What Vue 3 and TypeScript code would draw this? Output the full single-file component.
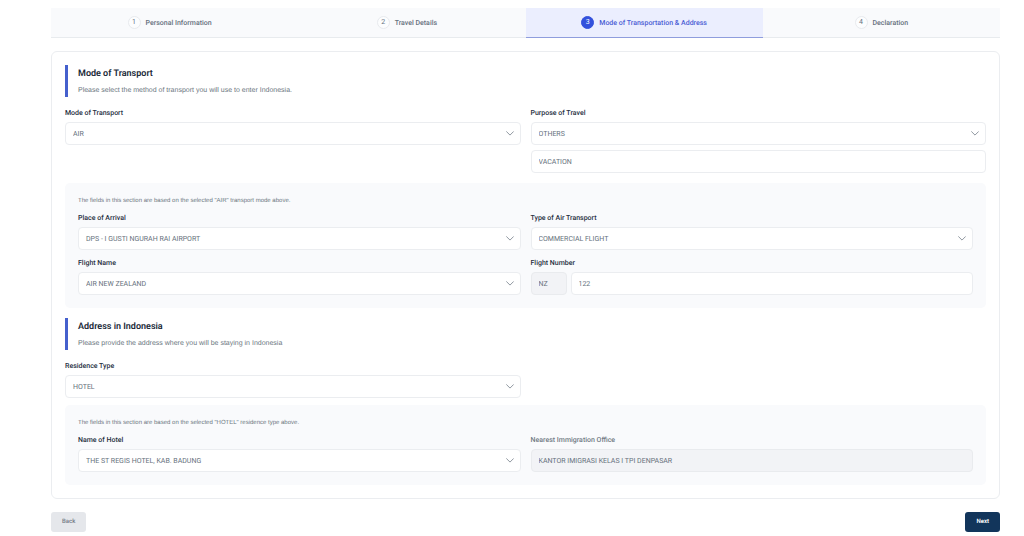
<script setup lang="ts">
import { ref } from 'vue'

interface Step {
  id: number
  title: string
}

const steps: Step[] = [
  { id: 1, title: 'Personal Information' },
  { id: 2, title: 'Travel Details' },
  { id: 3, title: 'Mode of Transportation & Address' },
  { id: 4, title: 'Declaration' },
]

const currentStep = ref(3)
const transportMode = ref('AIR')
const purpose = ref('OTHERS')
const purposeDetail = ref('VACATION')
const arrivalPlace = ref('DPS - I GUSTI NGURAH RAI AIRPORT')
const airTransport = ref('COMMERCIAL FLIGHT')
const airline = ref('AIR NEW ZEALAND')
const flightPrefix = ref('NZ')
const flightNumber = ref('122')
const residenceType = ref('HOTEL')
const hotel = ref('THE ST REGIS HOTEL, KAB. BADUNG')
const immigrationOffice = ref('KANTOR IMIGRASI KELAS I TPI DENPASAR')
</script>

<template>
  <main class="page">
    <nav aria-label="Progress">
      <ol class="stepper">
        <li v-for="step in steps" :key="step.id">
          <button
            type="button"
            class="step"
            :class="{ active: step.id === currentStep }"
            :aria-current="step.id === currentStep ? 'step' : undefined"
            @click="currentStep = step.id"
          >
            <span class="step-number">{{ step.id }}</span>
            <span>{{ step.title }}</span>
          </button>
        </li>
      </ol>
    </nav>

    <form @submit.prevent>
      <div class="card">
        <header class="heading">
          <h2>Mode of Transport</h2>
          <p>Please select the method of transport you will use to enter Indonesia.</p>
        </header>

        <div class="grid">
          <div class="field">
            <label for="transport-mode">Mode of Transport</label>
            <div class="select">
              <select id="transport-mode" v-model="transportMode" class="control">
                <option>AIR</option>
              </select>
              <svg class="chevron" viewBox="0 0 8 5" aria-hidden="true"><path d="M.6.7 4 4.1 7.4.7" /></svg>
            </div>
          </div>
          <div class="field">
            <label for="purpose">Purpose of Travel</label>
            <div class="select">
              <select id="purpose" v-model="purpose" class="control">
                <option>OTHERS</option>
              </select>
              <svg class="chevron" viewBox="0 0 8 5" aria-hidden="true"><path d="M.6.7 4 4.1 7.4.7" /></svg>
            </div>
            <input v-model="purposeDetail" class="control" type="text" aria-label="Other purpose of travel" />
          </div>
        </div>

        <section class="panel">
          <p class="note">The fields in this section are based on the selected "{{ transportMode }}" transport mode above.</p>
          <div class="grid">
            <div class="field">
              <label for="arrival">Place of Arrival</label>
              <div class="select">
                <select id="arrival" v-model="arrivalPlace" class="control">
                  <option>DPS - I GUSTI NGURAH RAI AIRPORT</option>
                </select>
                <svg class="chevron" viewBox="0 0 8 5" aria-hidden="true"><path d="M.6.7 4 4.1 7.4.7" /></svg>
              </div>
            </div>
            <div class="field">
              <label for="air-type">Type of Air Transport</label>
              <div class="select">
                <select id="air-type" v-model="airTransport" class="control">
                  <option>COMMERCIAL FLIGHT</option>
                </select>
                <svg class="chevron" viewBox="0 0 8 5" aria-hidden="true"><path d="M.6.7 4 4.1 7.4.7" /></svg>
              </div>
            </div>
            <div class="field">
              <label for="airline">Flight Name</label>
              <div class="select">
                <select id="airline" v-model="airline" class="control">
                  <option>AIR NEW ZEALAND</option>
                </select>
                <svg class="chevron" viewBox="0 0 8 5" aria-hidden="true"><path d="M.6.7 4 4.1 7.4.7" /></svg>
              </div>
            </div>
            <div class="field">
              <label for="flight-number">Flight Number</label>
              <div class="flight">
                <input v-model="flightPrefix" class="control prefix" type="text" aria-label="Airline code" disabled />
                <input id="flight-number" v-model="flightNumber" class="control" type="text" />
              </div>
            </div>
          </div>
        </section>

        <header class="heading">
          <h2>Address in Indonesia</h2>
          <p>Please provide the address where you will be staying in Indonesia</p>
        </header>

        <div class="grid">
          <div class="field">
            <label for="residence">Residence Type</label>
            <div class="select">
              <select id="residence" v-model="residenceType" class="control">
                <option>HOTEL</option>
              </select>
              <svg class="chevron" viewBox="0 0 8 5" aria-hidden="true"><path d="M.6.7 4 4.1 7.4.7" /></svg>
            </div>
          </div>
        </div>

        <section class="panel residence">
          <p class="note">The fields in this section are based on the selected "{{ residenceType }}" residence type above.</p>
          <div class="grid">
            <div class="field">
              <label for="hotel">Name of Hotel</label>
              <div class="select">
                <select id="hotel" v-model="hotel" class="control">
                  <option>THE ST REGIS HOTEL, KAB. BADUNG</option>
                </select>
                <svg class="chevron" viewBox="0 0 8 5" aria-hidden="true"><path d="M.6.7 4 4.1 7.4.7" /></svg>
              </div>
            </div>
            <div class="field">
              <label for="office" class="muted">Nearest Immigration Office</label>
              <input id="office" v-model="immigrationOffice" class="control" type="text" disabled />
            </div>
          </div>
        </section>
      </div>

      <div class="actions">
        <button type="button" class="button back">Back</button>
        <button type="submit" class="button next">Next</button>
      </div>
    </form>
  </main>
</template>

<style>
body {
  margin: 0;
  background: #fff;
}
</style>

<style scoped>
.page {
  padding: 8px 24px 4px 51px;
  font-family: Roboto, "Liberation Sans", sans-serif;
  font-size: 7px;
  line-height: 10px;
  color: #27303f;
  text-rendering: geometricPrecision;
}

.page * {
  box-sizing: border-box;
  text-rendering: inherit;
}

.stepper {
  display: grid;
  grid-template-columns: repeat(4, 1fr);
  margin: 0 0 13px;
  padding: 0;
  list-style: none;
}

.step {
  display: flex;
  align-items: center;
  justify-content: center;
  gap: 5px;
  width: 100%;
  height: 30px;
  padding: 0;
  border: 0;
  border-bottom: 1px solid #e8ebee;
  background: #f9fafc;
  color: #66717e;
  font: inherit;
  font-weight: 500;
}

.step-number {
  width: 13px;
  height: 13px;
  border: 1px solid #e8eaee;
  border-radius: 50%;
  background: #fcfdfe;
  line-height: 11px;
  text-align: center;
  font-weight: 400;
}

.step.active {
  border-bottom-color: #8f9ddd;
  background: #ebeefe;
  color: #4b60d5;
}

.active .step-number {
  border-color: #3351dc;
  background: #3351dc;
  color: #fff;
}

.card {
  padding: 13px;
  border: 1px solid #ebedf0;
  border-radius: 6px;
}

.heading {
  margin-bottom: 10px;
  padding: 3px 0 1px 10px;
  border-left: 3px solid #4560cd;
}

.heading h2 {
  margin: 0;
  font-size: 9px;
  line-height: 12px;
  font-weight: 600;
  color: #202938;
}

.heading p {
  margin: 6px 0 0;
  font-family: "Liberation Sans", Arial, sans-serif;
  color: #6c7781;
}

.grid {
  display: grid;
  grid-template-columns: 1fr 1fr;
  gap: 7px 10px;
}

.field {
  display: flex;
  flex-direction: column;
  align-self: start;
  gap: 5px;
  min-width: 0;
}

label {
  padding-top: 2px;
  line-height: 8px;
  font-weight: 500;
}

label.muted {
  color: #717a85;
}

.select {
  display: grid;
  align-items: center;
}

.select > * {
  grid-area: 1 / 1;
}

.control {
  width: 100%;
  min-width: 0;
  height: 23px;
  margin: 0;
  padding: 0 7px;
  border: 1px solid #ebedf0;
  border-radius: 4px;
  background: #fff;
  color: #66717c;
  font: inherit;
  appearance: none;
}

.control:disabled {
  border-color: #e9ebee;
  background: #f2f3f6;
  opacity: 1;
}

.chevron {
  justify-self: end;
  width: 8px;
  height: 5px;
  margin-right: 7px;
  fill: none;
  stroke: #9098a1;
  stroke-linecap: round;
  stroke-linejoin: round;
  pointer-events: none;
}

.panel {
  margin: 10px 0;
  padding: 14px 13px 13px;
  border-radius: 5px;
  background: #f9fafc;
}

.panel.residence {
  margin: 7px 0 0;
}

.note {
  margin: 0 0 7px;
  font-family: "Liberation Sans", Arial, sans-serif;
  font-size: 6px;
  line-height: 8px;
  color: #6c7781;
}

.flight {
  display: flex;
  gap: 4px;
}

.control.prefix {
  flex: none;
  width: 36px;
}

.actions {
  display: flex;
  justify-content: space-between;
  margin-top: 13px;
}

.button {
  height: 20px;
  padding: 0 11px;
  border: 0;
  border-radius: 3px;
  font: inherit;
  font-size: 6px;
  font-weight: 500;
}

.back {
  background: #e5e7eb;
  color: #727984;
}

.next {
  background: #12355b;
  color: #fff;
  font-weight: 600;
}
</style>
